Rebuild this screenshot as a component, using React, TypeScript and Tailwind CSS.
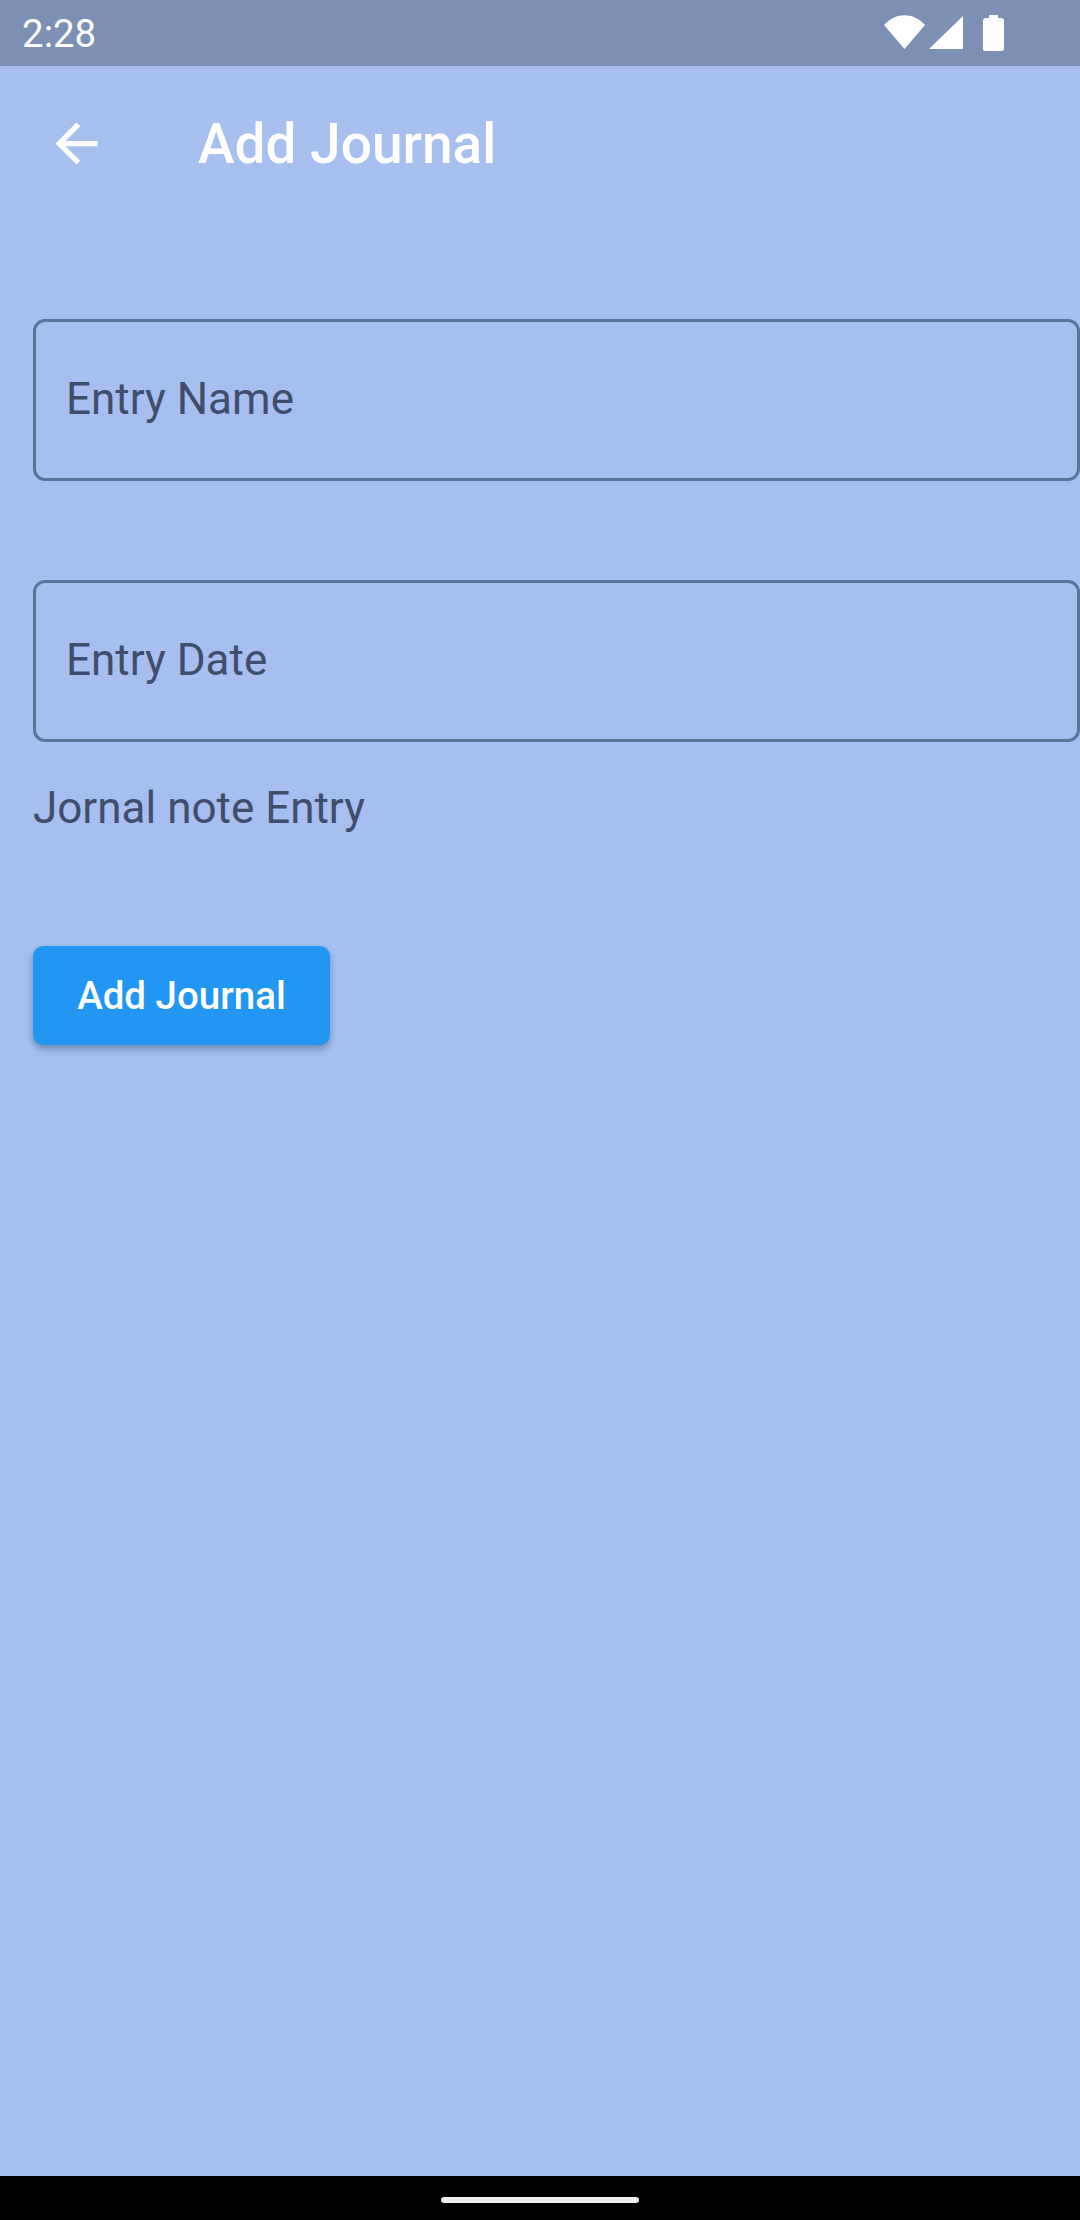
export default function App() {
  return (
    <div className="flex h-[2220px] w-[1080px] flex-col overflow-hidden bg-[#a6bfef] font-['Roboto',sans-serif]">
      <div className="flex h-[66px] shrink-0 items-center justify-between bg-[#7c90b6] pl-[22px] pr-[72px]">
        <span className="mt-[1px] text-[38.5px] leading-[66px] text-white">2:28</span>
        <svg width="124" height="40" viewBox="0 0 124 40" fill="white" className="mt-[1px]">
          <path d="M0 11 C12 -2 29 -2 41 11 L20.5 35 Z" />
          <path d="M45 35 L79 2 V35 Z" />
          <path d="M105 1 H114 V4 H117 Q120 4 120 7 V35 Q120 37 118 37 H101 Q99 37 99 35 V7 Q99 4 102 4 H105 Z" />
        </svg>
      </div>
      <header className="flex h-[147px] shrink-0 items-center pl-[45px] pt-[7px]">
        <svg width="63" height="63" viewBox="0 0 24 24" fill="white">
          <path d="M20 11H7.83l5.59-5.59L12 4l-8 8 8 8 1.41-1.41L7.83 13H20v-2z" />
        </svg>
        <h1 className="ml-[90px] mt-[2px] text-[55px] font-medium leading-[63px] text-white">Add Journal</h1>
      </header>
      <main className="flex flex-1 flex-col pl-[33px] pt-[106px]">
        <div className="flex h-[162px] items-center rounded-[12px] border-[3px] border-[#5b7499] pl-[30px] pb-[2px] text-[44px] leading-[50px] text-[#3f4e6b]">
          Entry Name
        </div>
        <div className="mt-[99px] flex h-[162px] items-center rounded-[12px] border-[3px] border-[#5b7499] pl-[30px] pb-[2px] text-[44px] leading-[50px] text-[#3f4e6b]">
          Entry Date
        </div>
        <p className="mt-[41px] text-[44px] leading-[50px] text-[#3f4e6b]">Jornal note Entry</p>
        <button className="mt-[113px] flex h-[99px] w-[297px] items-center justify-center rounded-[10px] bg-[#2196f3] text-[38.5px] font-medium text-white shadow-[0_4px_7px_rgba(40,60,100,0.4)]">
          Add Journal
        </button>
      </main>
      <div className="flex h-[44px] shrink-0 items-start justify-center bg-black pt-[21px]">
        <div className="h-[6px] w-[198px] rounded-full bg-[#eceef0]" />
      </div>
    </div>
  );
}
